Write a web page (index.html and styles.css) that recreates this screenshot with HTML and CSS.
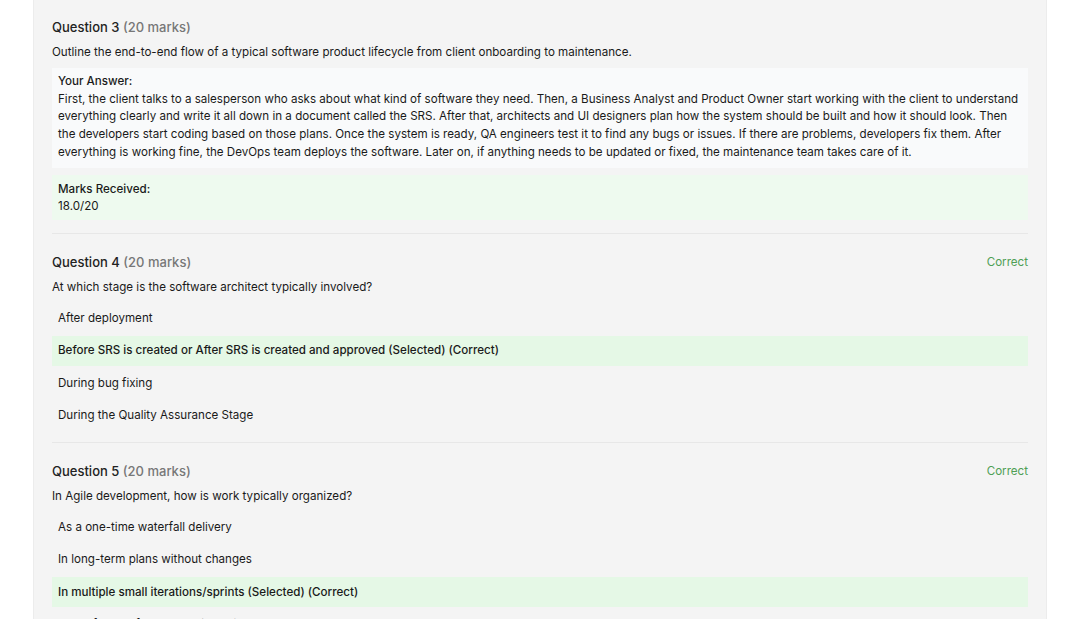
FILE: index.html
```html
<!DOCTYPE html>
<html lang="en">
<head>
<meta charset="utf-8">
<title>Results</title>
<link rel="stylesheet" href="styles.css">
</head>
<body>
<main class="panel">
  <section class="question">
    <div class="q-head">
      <h3 class="q-title">Question 3 <span class="marks">(20 marks)</span></h3>
    </div>
    <p class="q-text">Outline the end-to-end flow of a typical software product lifecycle from client onboarding to maintenance.</p>
    <div class="answer">
      <div class="label">Your Answer:</div>
      <div>First, the client talks to a salesperson who asks about what kind of software they need. Then, a Business Analyst and Product Owner start working with the client to understand everything clearly and write it all down in a document called the SRS. After that, architects and UI designers plan how the system should be built and how it should look. Then the developers start coding based on those plans. Once the system is ready, QA engineers test it to find any bugs or issues. If there are problems, developers fix them. After everything is working fine, the DevOps team deploys the software. Later on, if anything needs to be updated or fixed, the maintenance team takes care of it.</div>
    </div>
    <div class="received">
      <div class="label">Marks Received:</div>
      <div>18.0/20</div>
    </div>
  </section>

  <section class="question">
    <div class="q-head">
      <h3 class="q-title">Question 4 <span class="marks">(20 marks)</span></h3>
      <span class="status">Correct</span>
    </div>
    <p class="q-text">At which stage is the software architect typically involved?</p>
    <ul class="options">
      <li class="option">After deployment</li>
      <li class="option selected">Before SRS is created or After SRS is created and approved (Selected) (Correct)</li>
      <li class="option">During bug fixing</li>
      <li class="option">During the Quality Assurance Stage</li>
    </ul>
  </section>

  <section class="question">
    <div class="q-head">
      <h3 class="q-title">Question 5 <span class="marks">(20 marks)</span></h3>
      <span class="status">Correct</span>
    </div>
    <p class="q-text">In Agile development, how is work typically organized?</p>
    <ul class="options">
      <li class="option">As a one-time waterfall delivery</li>
      <li class="option">In long-term plans without changes</li>
      <li class="option selected">In multiple small iterations/sprints (Selected) (Correct)</li>
      <li class="option">Only after the full product is designed and documented</li>
    </ul>
  </section>
</main>
</body>
</html>
```

FILE: styles.css
```css
* { box-sizing: border-box; }
html, body { margin: 0; padding: 0; background: #ffffff; }
body {
  font-family: Inter, "Noto Sans", "Liberation Sans", sans-serif;
  color: #1a1a1a;
  font-size: 11.6px;
}
.panel {
  margin: -1px 0 0 33px;
  width: 1014px;
  background: #f4f4f4;
  border: 1px solid #ececec;
  border-top: none;
  padding: 0 18px;
  min-height: 640px;
}
.question {
  padding: 18px 0 11px;
  border-bottom: 1px solid #e7e7e7;
}
.question:first-child { padding-bottom: 13px; }
.q-head {
  display: flex;
  justify-content: space-between;
  align-items: center;
  height: 20px;
}
.q-title {
  margin: 0;
  font-size: 13px;
  font-weight: 500;
  color: #222;
}
.marks { color: #777; font-weight: 500; }
.status { color: #4f9f55; font-size: 11.6px; }
.q-text {
  margin: 7px 0 0;
  line-height: 17px;
}
.answer {
  margin-top: 7px;
  background: #f9fafb;
  padding: 5px 6px 6px;
  line-height: 17.7px;
}
.received {
  margin-top: 7px;
  background: #eefaef;
  padding: 6px 6px 4px;
  line-height: 17.7px;
}
.label { font-weight: 500; }
.options {
  list-style: none;
  margin: 7.5px 0 0;
  padding: 0;
}
.option {
  padding: 7.25px 6px;
  line-height: 15.5px;
  margin-bottom: 2.5px;
}
.option:last-child { margin-bottom: 0; }
.option.selected {
  background: #e5f8e6;
  font-weight: 500;
}
```
